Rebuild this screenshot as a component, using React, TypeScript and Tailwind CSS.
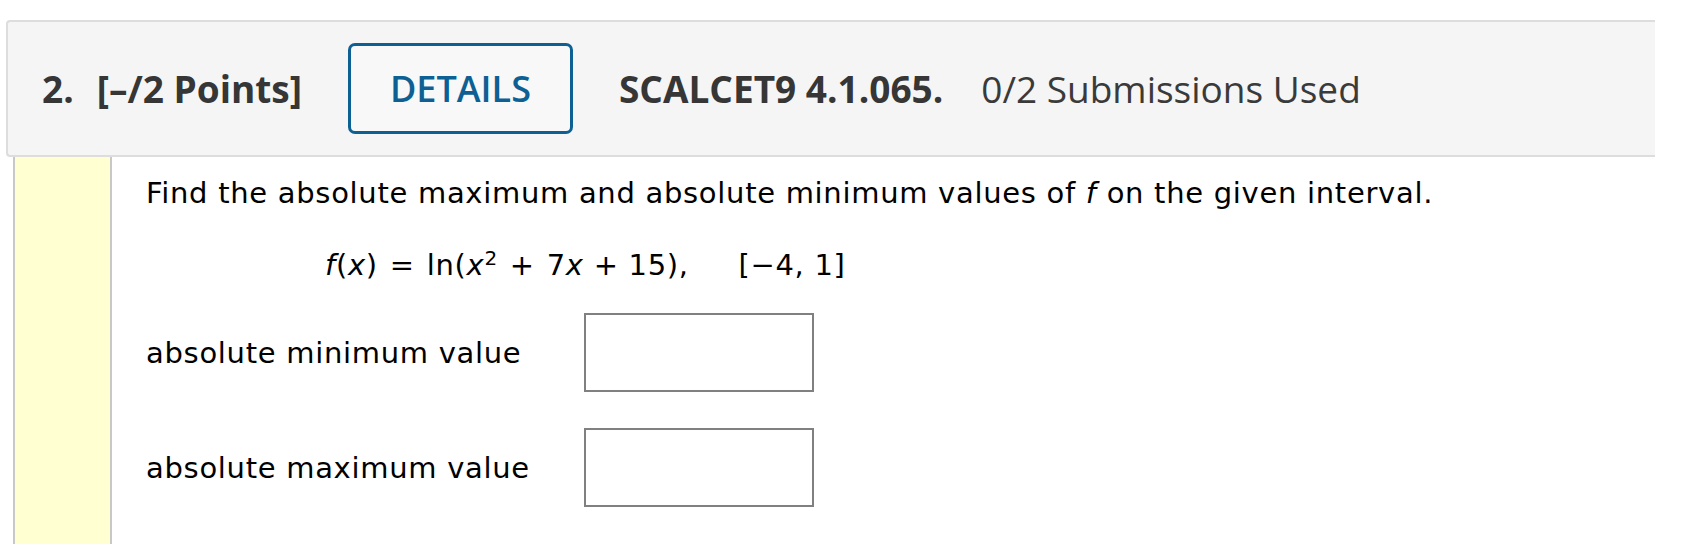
import React from 'react';

const headerFont = { fontFamily: '"Open Sans", "Liberation Sans", sans-serif' };
const bodyFont = { fontFamily: '"DejaVu Sans", Verdana, sans-serif' };

const AnswerRow = ({ label }: { label: string }) => (
  <div className="flex items-center">
    <span className="w-[438px] text-[29px] leading-[32px] tracking-[0.7px] text-black">{label}</span>
    <input
      type="text"
      className="w-[230px] h-[79px] border-2 border-[#808080] bg-white outline-none"
    />
  </div>
);

export default function App() {
  return (
    <div className="w-[1691px] h-[544px] bg-white overflow-hidden pt-[20px]">
      {/* question header */}
      <div
        style={headerFont}
        className="ml-[6px] w-[1649px] h-[137px] flex items-center pl-[34px] bg-[#f5f5f5] border-2 border-r-0 border-[#dddddd] rounded-l-[4px] text-[#363636]"
      >
        <span className="text-[37px] font-bold">2.</span>
        <span className="ml-[23px] text-[37px] font-bold">[–/2 Points]</span>
        <button className="ml-[46px] h-[91px] px-[39px] rounded-[7px] border-[3px] border-[#0d6093] bg-[#f8f8f8] text-[36px] font-semibold text-[#0d6093]">
          DETAILS
        </button>
        <span className="ml-[46px] text-[37px] font-bold">SCALCET9 4.1.065.</span>
        <span className="ml-[38px] text-[37px] text-[#3a3a3a]">0/2 Submissions Used</span>
      </div>

      {/* question body */}
      <div className="flex ml-[13px]">
        <div className="w-[99px] h-[387px] shrink-0 bg-[#ffffd1] border-x-2 border-[#c8c8c8]" />
        <div style={bodyFont} className="pl-[34px] pt-[20px] text-black tracking-[0.7px]">
          <p className="text-[29px] leading-[32px]">
            Find the absolute maximum and absolute minimum values of <i>f</i> on the given interval.
          </p>
          <p className="mt-[40px] ml-[179px] text-[29px] leading-[32px] whitespace-pre">
            <i>f</i>(<i>x</i>) <span className="px-[2px]">=</span> ln(<i>x</i>
            <sup className="text-[20px] relative -top-[10px]">2</sup> <span className="px-[2px]">+</span> 7<i>x</i> + 15),{'     '}[−4, 1]
          </p>
          <div className="mt-[32px] flex flex-col gap-[36px]">
            <AnswerRow label="absolute minimum value" />
            <AnswerRow label="absolute maximum value" />
          </div>
        </div>
      </div>
    </div>
  );
}
